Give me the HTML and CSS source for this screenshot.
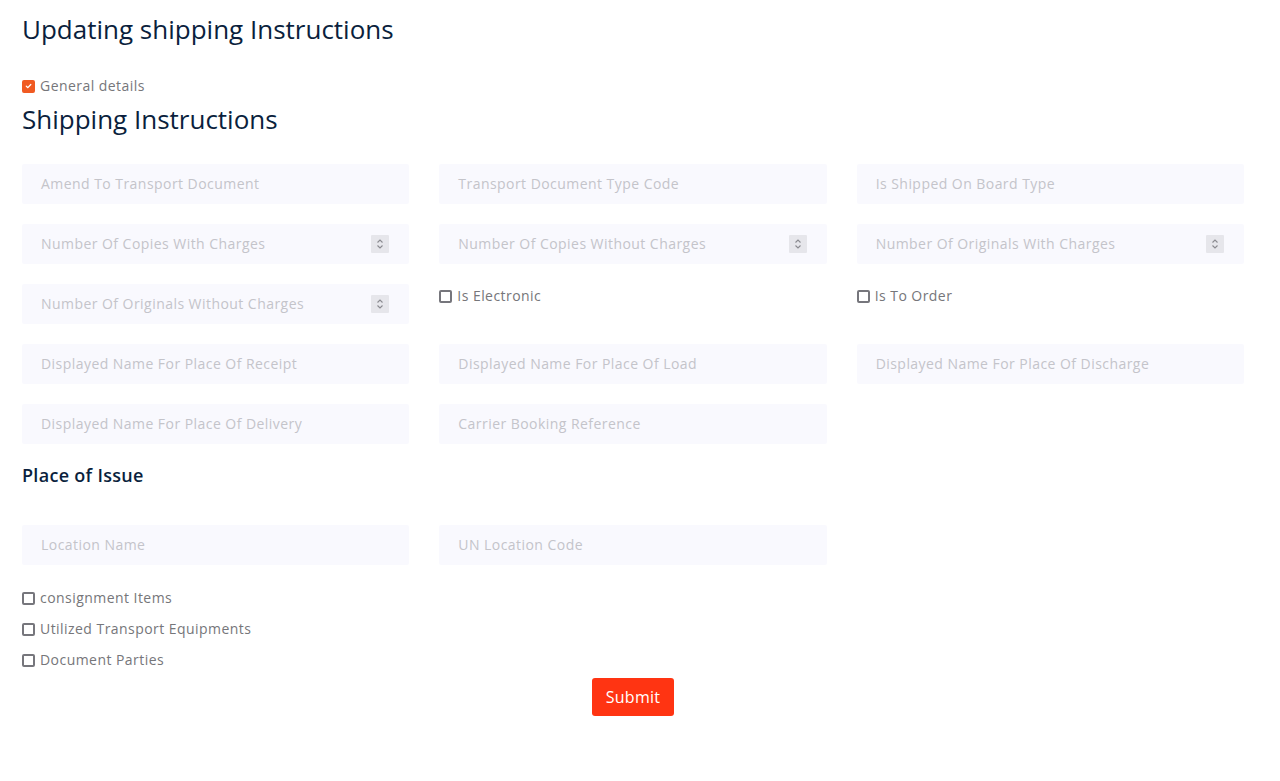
FILE: index.html
```html
<!DOCTYPE html>
<html>
<head>
<meta charset="utf-8">
<link rel="stylesheet" href="styles.css">
</head>
<body>
<div class="page">
  <h1 class="title">Updating shipping Instructions</h1>
  <label class="check top-check"><span class="box checked"><svg viewBox="0 0 14 14" width="14" height="14"><path d="M3.5 7.2 L6 9.6 L10.6 4.6" fill="none" stroke="#fff" stroke-width="2" stroke-linecap="round" stroke-linejoin="round"/></svg></span>General details</label>
  <h2 class="title section">Shipping Instructions</h2>

  <div class="grid">
    <div class="field"><span class="ph">Amend To Transport Document</span></div>
    <div class="field"><span class="ph">Transport Document Type Code</span></div>
    <div class="field"><span class="ph">Is Shipped On Board Type</span></div>

    <div class="field"><span class="ph">Number Of Copies With Charges</span><span class="spin"><svg viewBox="0 0 18 18" width="18" height="18"><path d="M6.5 7.5 L9 5 L11.5 7.5 M6.5 10.5 L9 13 L11.5 10.5" fill="none" stroke="#8a8a90" stroke-width="1.1"/></svg></span></div>
    <div class="field"><span class="ph">Number Of Copies Without Charges</span><span class="spin"><svg viewBox="0 0 18 18" width="18" height="18"><path d="M6.5 7.5 L9 5 L11.5 7.5 M6.5 10.5 L9 13 L11.5 10.5" fill="none" stroke="#8a8a90" stroke-width="1.1"/></svg></span></div>
    <div class="field"><span class="ph">Number Of Originals With Charges</span><span class="spin"><svg viewBox="0 0 18 18" width="18" height="18"><path d="M6.5 7.5 L9 5 L11.5 7.5 M6.5 10.5 L9 13 L11.5 10.5" fill="none" stroke="#8a8a90" stroke-width="1.1"/></svg></span></div>

    <div class="field"><span class="ph">Number Of Originals Without Charges</span><span class="spin"><svg viewBox="0 0 18 18" width="18" height="18"><path d="M6.5 7.5 L9 5 L11.5 7.5 M6.5 10.5 L9 13 L11.5 10.5" fill="none" stroke="#8a8a90" stroke-width="1.1"/></svg></span></div>
    <div class="cell"><label class="check"><span class="box"></span>Is Electronic</label></div>
    <div class="cell"><label class="check"><span class="box"></span>Is To Order</label></div>

    <div class="field"><span class="ph">Displayed Name For Place Of Receipt</span></div>
    <div class="field"><span class="ph">Displayed Name For Place Of Load</span></div>
    <div class="field"><span class="ph">Displayed Name For Place Of Discharge</span></div>

    <div class="field"><span class="ph">Displayed Name For Place Of Delivery</span></div>
    <div class="field"><span class="ph">Carrier Booking Reference</span></div>
  </div>

  <h3 class="title sub">Place of Issue</h3>

  <div class="grid grid2">
    <div class="field"><span class="ph">Location Name</span></div>
    <div class="field"><span class="ph">UN Location Code</span></div>
  </div>

  <div class="checks">
    <label class="check"><span class="box"></span>consignment Items</label>
    <label class="check"><span class="box"></span>Utilized Transport Equipments</label>
    <label class="check"><span class="box"></span>Document Parties</label>
  </div>

  <div class="actions"><button class="submit">Submit</button></div>
</div>
</body>
</html>
```
FILE: styles.css
```css
* { box-sizing: border-box; }
html, body { margin: 0; padding: 0; background: #fff; }
body { font-family: "Open Sans", "Liberation Sans", sans-serif; }
.page { width: 1222px; margin-left: 22px; display: flex; flex-direction: column; }
.title { color: #0b1f3d; font-weight: 500; margin: 0; }
h1.title { font-size: 26px; line-height: 36px; margin-top: 11px; letter-spacing: 0; }
.top-check { margin-top: 29px; }
.section { font-size: 26px; line-height: 36px; margin-top: 5px; letter-spacing: 0; }
.grid { display: grid; grid-template-columns: repeat(3, 1fr); column-gap: 30px; row-gap: 20px; margin-top: 27px; grid-auto-rows: 40px; }
.grid2 { margin-top: 37px; }
.field { background: #f9f9fe; border-radius: 2px; display: flex; align-items: center; justify-content: space-between; padding: 0 20px 1px 19px; }
.ph { color: #c4c4ca; font-size: 14px; letter-spacing: 0.45px; }
.spin { width: 18px; height: 18px; background: #e6e6eb; display: flex; border-radius: 1px; margin-top: 1px; }
.cell { display: flex; align-items: flex-start; }
.check { display: flex; align-items: center; gap: 5px; font-size: 14px; line-height: 20px; color: #76767a; letter-spacing: 0.45px; }
.cell .check { line-height: 24px; }
.box { width: 13px; height: 13px; border: 2px solid #76767c; border-radius: 2px; display: flex; align-items: center; justify-content: center; flex: none; }
.box.checked { background: #f05a22; border-color: #f05a22; }
.box.checked svg { width: 12px; height: 12px; }
.sub { font-size: 18px; line-height: 26px; margin-top: 18px; font-weight: 600; letter-spacing: 0.3px; }
.checks { display: flex; flex-direction: column; gap: 11px; margin-top: 23px; }
.actions { display: flex; justify-content: center; margin-top: 8px; }
.submit { background: #ff3412; color: #fff; border: none; border-radius: 3px; width: 82px; height: 38px; font-family: inherit; font-size: 16px; padding: 0; letter-spacing: 0.3px; }
```
